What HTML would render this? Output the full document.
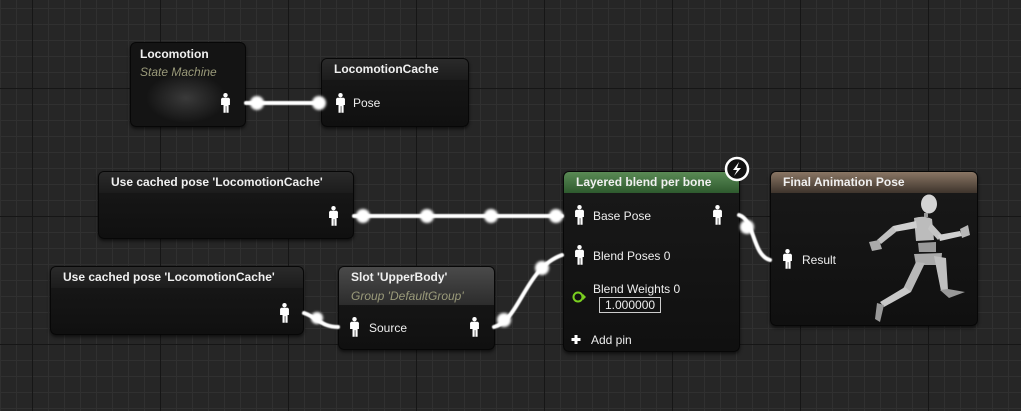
<!DOCTYPE html>
<html><head><meta charset="utf-8"><style>
html,body{margin:0;padding:0;width:1021px;height:411px;overflow:hidden;background:#262626;font-family:"Liberation Sans",sans-serif;}
#bg{position:absolute;left:0;top:0;width:1021px;height:411px;
background-image:
linear-gradient(to right,#161616 0,#161616 1px,transparent 1px),
linear-gradient(to bottom,#161616 0,#161616 1px,transparent 1px),
linear-gradient(to right,#303030 0,#303030 1px,transparent 1px),
linear-gradient(to bottom,#303030 0,#303030 1px,transparent 1px);
background-size:128px 128px,128px 128px,16px 16px,16px 16px;
background-position:32px 88px,32px 88px,0 8px,0 8px;}
.n{position:absolute;background:linear-gradient(#191919,#101010);border:1px solid #070707;border-radius:6px;box-shadow:0 2px 3px rgba(0,0,0,.6);color:#fff;overflow:hidden}
.h{height:21px;background:linear-gradient(#2a2a2a,#1c1c1c);font-weight:bold;font-size:12px;line-height:21px;padding-left:12px;color:#f0f0f0}
.t{position:absolute;font-size:12px;color:#eee}
.b{position:absolute;font-size:12px;font-weight:bold;color:#f0f0f0}
.s{position:absolute;font-size:12px;font-style:italic;color:#9a9a7a}
svg{position:absolute;left:0;top:0}
</style></head><body>
<div id="bg"></div>

<div class="n" style="left:130px;top:42px;width:114px;height:83px;background:radial-gradient(ellipse 40px 25px at 55px 55px,#3a3a3a,#141414)"><div class="b" style="left:9px;top:4px">Locomotion</div><div class="s" style="left:9px;top:22px">State Machine</div></div>

<div class="n" style="left:321px;top:58px;width:146px;height:67px"><div class="h">LocomotionCache</div><div class="t" style="left:31px;top:37px">Pose</div></div>

<div class="n" style="left:98px;top:171px;width:254px;height:66px"><div class="h">Use cached pose 'LocomotionCache'</div></div>

<div class="n" style="left:50px;top:266px;width:252px;height:67px"><div class="h">Use cached pose 'LocomotionCache'</div></div>

<div class="n" style="left:338px;top:266px;width:155px;height:82px"><div class="h" style="height:38px;background:linear-gradient(#4a4a4a,#2c2c2c)">Slot 'UpperBody'</div><div class="s" style="left:12px;top:22px">Group 'DefaultGroup'</div><div class="t" style="left:30px;top:54px">Source</div></div>

<div class="n" style="left:563px;top:171px;width:175px;height:179px"><div class="h" style="background:linear-gradient(#5a8a55,#2e5a2e)">Layered blend per bone</div>
<div class="t" style="left:29px;top:37px">Base Pose</div>
<div class="t" style="left:29px;top:77px">Blend Poses 0</div>
<div class="t" style="left:29px;top:110px">Blend Weights 0</div>
<div class="t" style="left:35px;top:125px;border:1px solid #ccc;padding:0 5px;line-height:14px">1.000000</div>
<div class="t" style="left:27px;top:161px">Add pin</div>
</div>

<div class="n" style="left:770px;top:171px;width:206px;height:153px"><div class="h" style="background:linear-gradient(#8a7664,#3e342c)">Final Animation Pose</div><div class="t" style="left:31px;top:81px">Result</div></div>

<svg width="1021" height="411" viewBox="0 0 1021 411">
<defs>
<symbol id="p" viewBox="0 0 8 18"><circle cx="4" cy="2" r="2" fill="#fff"/><path d="M1 4.3h6l1 1v5.5h-1.2v7h-2v-6h-0.6v6h-2v-7H0v-5.5z" fill="#fff"/></symbol>
<filter id="gl"><feGaussianBlur stdDeviation="1.2"/></filter>
<filter id="gw"><feGaussianBlur stdDeviation="0.6"/></filter>
</defs>
<g stroke="#fff" stroke-width="4" fill="none" stroke-linecap="round" filter="url(#gw)">
<path d="M246 103H320"/>
<path d="M354 216H562"/>
<path d="M304 313C318 318 322 327 338 327"/>
<path d="M494 327C520 320 525 268 562 255"/>
<path d="M739 215C755 220 752 255 770 260"/>
</g>
<g fill="#fff" filter="url(#gl)">
<circle cx="257" cy="103" r="7"/><circle cx="319" cy="103" r="7"/>
<circle cx="363" cy="216" r="7"/><circle cx="427" cy="216" r="7"/><circle cx="491" cy="216" r="7"/><circle cx="556" cy="216" r="7"/>
<circle cx="317" cy="318" r="6"/><circle cx="504" cy="320" r="7"/><circle cx="542" cy="268" r="7"/><circle cx="747" cy="227" r="7"/>
</g>
<g>
<use href="#p" x="221" y="93" width="9" height="20"/>
<use href="#p" x="336" y="93" width="9" height="20"/>
<use href="#p" x="329" y="206" width="9" height="20"/>
<use href="#p" x="280" y="303" width="9" height="20"/>
<use href="#p" x="350" y="317" width="9" height="20"/>
<use href="#p" x="470" y="317" width="9" height="20"/>
<use href="#p" x="575" y="205" width="9" height="20"/>
<use href="#p" x="713" y="205" width="9" height="20"/>
<use href="#p" x="575" y="245" width="9" height="20"/>
<use href="#p" x="783" y="249" width="9" height="20"/>
</g>
<path d="M576 335v9M571.5 339.5h9" stroke="#fff" stroke-width="3"/>
<circle cx="578" cy="297" r="4.5" fill="none" stroke="#7ad020" stroke-width="2"/><path d="M583 294l3 3-3 3z" fill="#7ad020"/>
<circle cx="737" cy="169" r="11" fill="#111" stroke="#fff" stroke-width="2.5"/>
<path d="M739 162l-6 8h4l-3 6 7-8h-4z" fill="#fff"/>
<g fill="#c8c8c8">
<ellipse cx="929" cy="204" rx="8" ry="9.5" fill="#d4d4d4"/>
<rect x="924" y="213" width="4" height="4" fill="#999"/>
<path d="M914 218Q924 215 932 219L934 240L916 241Z" fill="#bcbcbc"/>
<path d="M916 221L893 226L894 232L917 228Z" fill="#d0d0d0"/>
<path d="M893 226L877 240L881 244L896 232Z" fill="#c0c0c0"/>
<path d="M869 242L879 240L882 249L872 251Z" fill="#aaa"/>
<path d="M931 223L942 235L938 240L928 229Z" fill="#c4c4c4"/>
<path d="M938 235L960 231L962 236L940 241Z" fill="#d0d0d0"/>
<path d="M960 229L968 225L970 235L962 238Z" fill="#b8b8b8"/>
<path d="M918 243L936 242L936 252L919 252Z" fill="#999"/>
<path d="M914 254L942 253L941 265L916 265Z" fill="#aaa"/>
<path d="M916 262L925 263L911 292L903 289Z" fill="#b8b8b8"/>
<path d="M905 287L911 292L884 307L880 302Z" fill="#c8c8c8"/>
<path d="M877 303L884 305L880 322L875 319Z" fill="#999"/>
<path d="M934 256L946 258L948 290L941 291Z" fill="#c0c0c0"/>
<path d="M940 290L948 289L965 292L949 298Z" fill="#999"/>
</g>
</svg>
</body></html>
